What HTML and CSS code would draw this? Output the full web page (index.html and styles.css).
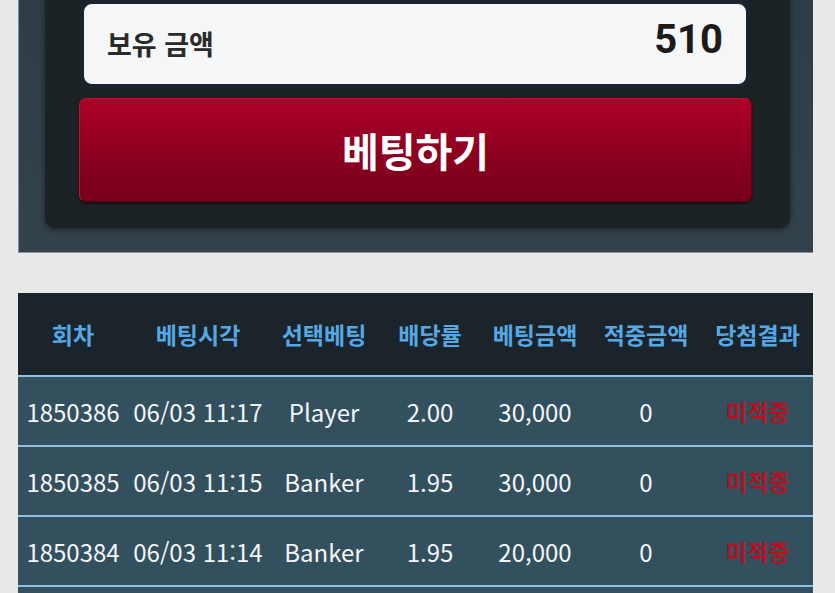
FILE: index.html
```html
<!DOCTYPE html>
<html lang="ko">
<head>
<meta charset="utf-8">
<link rel="stylesheet" href="styles.css">
</head>
<body>
<div class="panel">
  <div class="inner">
    <div class="balance">
      <span class="label">보유 금액</span>
      <span class="amount">510</span>
    </div>
    <div class="bet-btn">베팅하기</div>
  </div>
</div>
<table class="history">
  <colgroup>
    <col style="width:110px"><col style="width:140px"><col style="width:112px"><col style="width:100px"><col style="width:110px"><col style="width:112px"><col style="width:111px">
  </colgroup>
  <thead>
    <tr><th>회차</th><th>베팅시각</th><th>선택베팅</th><th>배당률</th><th>베팅금액</th><th>적중금액</th><th>당첨결과</th></tr>
  </thead>
  <tbody>
    <tr><td>1850386</td><td>06/03 11:17</td><td>Player</td><td>2.00</td><td>30,000</td><td>0</td><td class="lose">미적중</td></tr>
    <tr><td>1850385</td><td>06/03 11:15</td><td>Banker</td><td>1.95</td><td>30,000</td><td>0</td><td class="lose">미적중</td></tr>
    <tr><td>1850384</td><td>06/03 11:14</td><td>Banker</td><td>1.95</td><td>20,000</td><td>0</td><td class="lose">미적중</td></tr>
    <tr class="peek"><td></td><td></td><td></td><td></td><td></td><td></td><td></td></tr>
  </tbody>
</table>
</body>
</html>
```
FILE: styles.css
```css
html, body {
  margin: 0;
  padding: 0;
  background: #e9e9e9;
  overflow: hidden;
  font-family: "Noto Sans CJK KR", "Noto Sans", sans-serif;
}
.panel {
  margin: -40px 0 0 18px;
  width: 795px;
  box-sizing: border-box;
  padding: 0 23px 24px 26px;
  background: linear-gradient(#2f3c45, #34424c);
  border-left: 1px solid #7e8e9a;
  border-bottom: 1px solid #8796a2;
}
.inner {
  background: #1c2327;
  border-radius: 0 0 10px 10px;
  padding: 43px 38px 26px 34px;
  box-shadow: 0 2px 6px rgba(0,0,0,0.45);
}
.balance {
  margin: 0 5px 13px 4px;
  height: 80px;
  background: #f5f6f7;
  border: 1px solid #17214a;
  border-radius: 9px;
  display: flex;
  align-items: center;
  justify-content: space-between;
  padding: 0 23px 0 23px;
}
.label {
  font-size: 27px;
  font-weight: 700;
  color: #2a2a2a;
  margin-top: -2px;
}
.amount {
  font-family: Roboto, "Liberation Sans", sans-serif;
  font-size: 40px;
  font-weight: 700;
  color: #1b1b1b;
  margin-top: -10px;
}
.bet-btn {
  height: 102px;
  border: 1px solid #5e0012;
  border-left-color: #c8102c;
  border-top-color: #b8102c;
  border-radius: 7px;
  background: linear-gradient(#ad0229, #8c0020 55%, #76001a);
  color: #fff;
  font-size: 40px;
  font-weight: 700;
  display: flex;
  align-items: center;
  justify-content: center;
  box-shadow: 0 2px 3px rgba(0,0,0,0.5);
}
.history {
  margin: 40px 0 0 18px;
  width: 795px;
  table-layout: fixed;
  border-collapse: collapse;
}
.history th {
  background: #1b242b;
  color: #55a8e4;
  font-size: 23px;
  font-weight: 700;
  height: 82px;
  padding: 0;
  text-align: center;
  border-bottom: 2px solid #8dc0e3;
}
.history td {
  background: #33505f;
  color: #f4f6f8;
  font-size: 24px;
  height: 68px;
  padding: 0;
  text-align: center;
  border-bottom: 2px solid #8dc0e3;
  white-space: nowrap;
}
.history td.lose {
  color: #b5121f;
  font-weight: 700;
  font-size: 23px;
}
```
